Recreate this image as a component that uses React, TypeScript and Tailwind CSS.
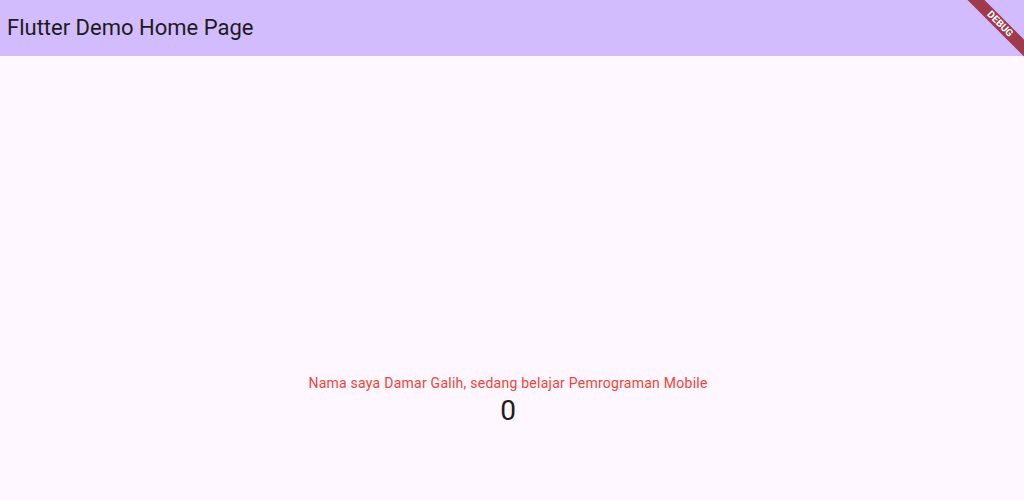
export default function App() {
  return (
    <div
      className="relative w-[1024px] h-[500px] overflow-hidden bg-[#fef7ff]"
      style={{ fontFamily: "Roboto, 'Liberation Sans', sans-serif" }}
    >
      <header className="h-14 bg-[#d3bcfd] flex items-center pl-[7px]">
        <h1 className="text-[22px] leading-7 text-[#1d1b20]">Flutter Demo Home Page</h1>
      </header>

      <main className="flex flex-col items-center pt-[317px] pr-2">
        <p className="text-sm leading-5 tracking-[0.25px] text-[#f44336]">
          Nama saya Damar Galih, sedang belajar Pemrograman Mobile
        </p>
        <p className="text-[28px] leading-9 text-[#1d1b20]">0</p>
      </main>

      {/* debug banner */}
      <div className="absolute left-[940px] top-[18px] w-[120px] h-3 rotate-45 bg-[#9e3a4c] flex items-center justify-center">
        <span className="text-[10px] leading-3 font-bold text-white">DEBUG</span>
      </div>
    </div>
  );
}
